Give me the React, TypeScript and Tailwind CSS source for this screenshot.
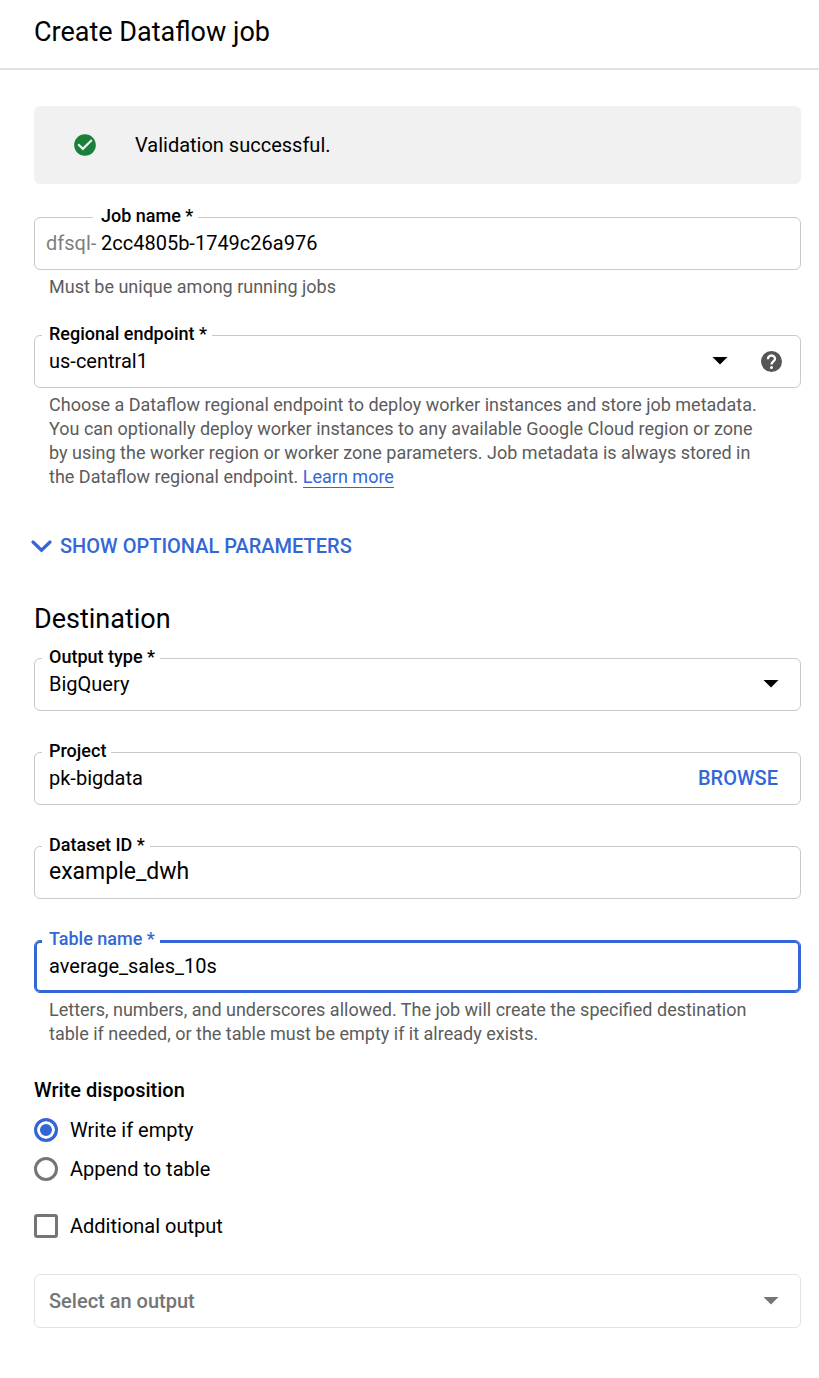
import { useState } from "react";
import type { ReactNode } from "react";
import { MdArrowDropDown, MdCheckCircle } from "react-icons/md";

type FieldProps = {
  id: string;
  label?: string;
  active?: boolean;
  muted?: boolean;
  prefix?: string;
  helper?: ReactNode;
  children: ReactNode;
};

function Field({ id, label, active, muted, prefix, helper, children }: FieldProps) {
  const outline = active
    ? "h-[53px] border-[#3367d6] shadow-[inset_0_0_0_2px_#3367d6]"
    : muted
      ? "h-[54px] border-[#e3e3e3]"
      : "h-[53px] border-[#c9c9c9]";
  return (
    <div>
      <div className={`relative flex items-center rounded-md border ${outline}`}>
        {label && (
          <label
            htmlFor={id}
            className={`absolute -top-3.5 z-10 bg-white pr-[5px] text-lg leading-6 font-medium ${
              prefix ? "left-[58px] pl-2" : "left-[7px] pl-[7px]"
            } ${active ? "text-[#3367d6]" : "text-black"}`}
          >
            {label}
          </label>
        )}
        {prefix && <span className="w-[66px] shrink-0 pb-0.5 pl-[11px] text-xl text-[#808080]">{prefix}</span>}
        {children}
      </div>
      {helper && <p className="pt-[5px] pr-[33px] pl-[15px] text-lg leading-6 text-[#5c5c5c]">{helper}</p>}
    </div>
  );
}

type SelectProps = { id: string; options: string[]; placeholder?: boolean; label?: string };

function Select({ id, options, placeholder, label }: SelectProps) {
  return (
    <div className="relative h-full min-w-0 flex-1">
      <select
        id={id}
        aria-label={label}
        className={`h-full w-full appearance-none bg-transparent pr-12 pl-3.5 text-xl outline-none ${
          placeholder ? "font-medium text-[#757575]" : "pb-0.5 text-black"
        }`}
      >
        {options.map((option) => (
          <option key={option}>{option}</option>
        ))}
      </select>
      <MdArrowDropDown
        size={36}
        className={`pointer-events-none absolute right-[11px] ${
          placeholder ? "top-[7px] text-[#757575]" : "top-1.5 text-black"
        }`}
      />
    </div>
  );
}

function HelpIcon() {
  return (
    <svg width="21" height="21" viewBox="0 0 21 21" fill="none">
      <circle cx="10.5" cy="10.5" r="10.5" fill="#555555" />
      <path d="M7 8.2V7.6a3.5 3.1 0 1 1 5.9 2.3c-1.2 1.2-2.4 1.7-2.4 3.7" stroke="white" strokeWidth="2.3" />
      <circle cx="10.5" cy="16.6" r="1.5" fill="white" />
    </svg>
  );
}

const inputClass = "h-full w-full min-w-0 flex-1 bg-transparent pb-0.5 text-black outline-none";
const radioClass =
  "size-6 shrink-0 appearance-none rounded-full border-3 border-[#757575] bg-white checked:border-[#3367d6] checked:bg-[#3367d6] checked:shadow-[inset_0_0_0_3px_white]";

export default function App() {
  const [disposition, setDisposition] = useState("empty");
  const [expanded, setExpanded] = useState(false);

  return (
    <div className="min-h-screen bg-white font-['Roboto',sans-serif] text-black">
      <header className="flex h-[70px] items-center border-b-2 border-[#e2e2e2] px-[34px] pb-1">
        <h1 className="text-[27px] leading-9">Create Dataflow job</h1>
      </header>

      <form className="flex flex-col pt-9 pr-[18px] pb-12 pl-[34px]" onSubmit={(e) => e.preventDefault()}>
        <div role="status" className="flex h-[78px] items-center rounded-md bg-[#f1f1f1] pl-[38px] text-xl">
          <MdCheckCircle size={26} className="mr-[37px] text-[#188038]" />
          Validation successful.
        </div>

        <div className="mt-[33px] flex flex-col gap-9">
          <Field id="job-name" label="Job name *" prefix="dfsql-" helper="Must be unique among running jobs">
            <input id="job-name" className={`${inputClass} text-xl`} defaultValue="2cc4805b-1749c26a976" />
          </Field>

          <Field
            id="endpoint"
            label="Regional endpoint *"
            helper={
              <>
                Choose a Dataflow regional endpoint to deploy worker instances and store job metadata. You can
                optionally deploy worker instances to any available Google Cloud region or zone by using the worker
                region or worker zone parameters. Job metadata is always stored in the Dataflow regional endpoint.{" "}
                <a href="#learn-more" className="border-b border-[#3367d6] text-[#3367d6]">
                  Learn more
                </a>
              </>
            }
          >
            <Select id="endpoint" options={["us-central1"]} />
            <button type="button" aria-label="Help" className="mr-[18px] ml-3">
              <HelpIcon />
            </button>
          </Field>
        </div>

        <button
          type="button"
          aria-expanded={expanded}
          onClick={() => setExpanded(!expanded)}
          className="mt-[41px] -ml-[3px] flex h-8 items-center gap-2 self-start text-xl font-medium text-[#3367d6]"
        >
          <svg
            width="21"
            height="14"
            viewBox="0 0 21 14"
            fill="none"
            stroke="currentColor"
            strokeWidth="3.2"
            strokeLinecap="round"
          >
            <path d="M2 3 10.5 11.2 19 3" />
          </svg>
          SHOW OPTIONAL PARAMETERS
        </button>

        <h2 className="mt-[39px] text-[27px] leading-9">Destination</h2>

        <div className="mt-[21px] flex flex-col gap-[41px]">
          <Field id="output-type" label="Output type *">
            <Select id="output-type" options={["BigQuery"]} />
          </Field>
          <Field id="project" label="Project">
            <input id="project" className={`${inputClass} pl-3.5 text-xl`} defaultValue="pk-bigdata" />
            <button type="button" className="px-[22px] pb-0.5 text-xl font-medium text-[#3367d6]">
              BROWSE
            </button>
          </Field>
          <Field id="dataset" label="Dataset ID *">
            <input id="dataset" className={`${inputClass} px-3.5 text-[23px]`} defaultValue="example_dwh" />
          </Field>
          <Field
            id="table-name"
            label="Table name *"
            active
            helper="Letters, numbers, and underscores allowed. The job will create the specified destination table if needed, or the table must be empty if it already exists."
          >
            <input id="table-name" className={`${inputClass} px-3.5 text-xl`} defaultValue="average_sales_10s" />
          </Field>
        </div>

        <fieldset className="mt-8">
          <legend className="text-xl leading-6 font-medium">Write disposition</legend>
          <div className="flex flex-col gap-[15px] pt-4">
            <label className="flex items-center gap-3 text-xl leading-6">
              <input
                type="radio"
                name="disposition"
                checked={disposition === "empty"}
                onChange={() => setDisposition("empty")}
                className={radioClass}
              />
              Write if empty
            </label>
            <label className="flex items-center gap-3 text-xl leading-6">
              <input
                type="radio"
                name="disposition"
                checked={disposition === "append"}
                onChange={() => setDisposition("append")}
                className={radioClass}
              />
              Append to table
            </label>
          </div>
        </fieldset>

        <label className="mt-[33px] flex items-center gap-3 text-xl leading-6">
          <input
            type="checkbox"
            className="size-6 shrink-0 appearance-none rounded-[3px] border-3 border-[#757575] checked:bg-[#3367d6]"
          />
          Additional output
        </label>

        <div className="mt-9">
          <Field id="extra-output" muted>
            <Select id="extra-output" label="Select an output" options={["Select an output"]} placeholder />
          </Field>
        </div>
      </form>
    </div>
  );
}
